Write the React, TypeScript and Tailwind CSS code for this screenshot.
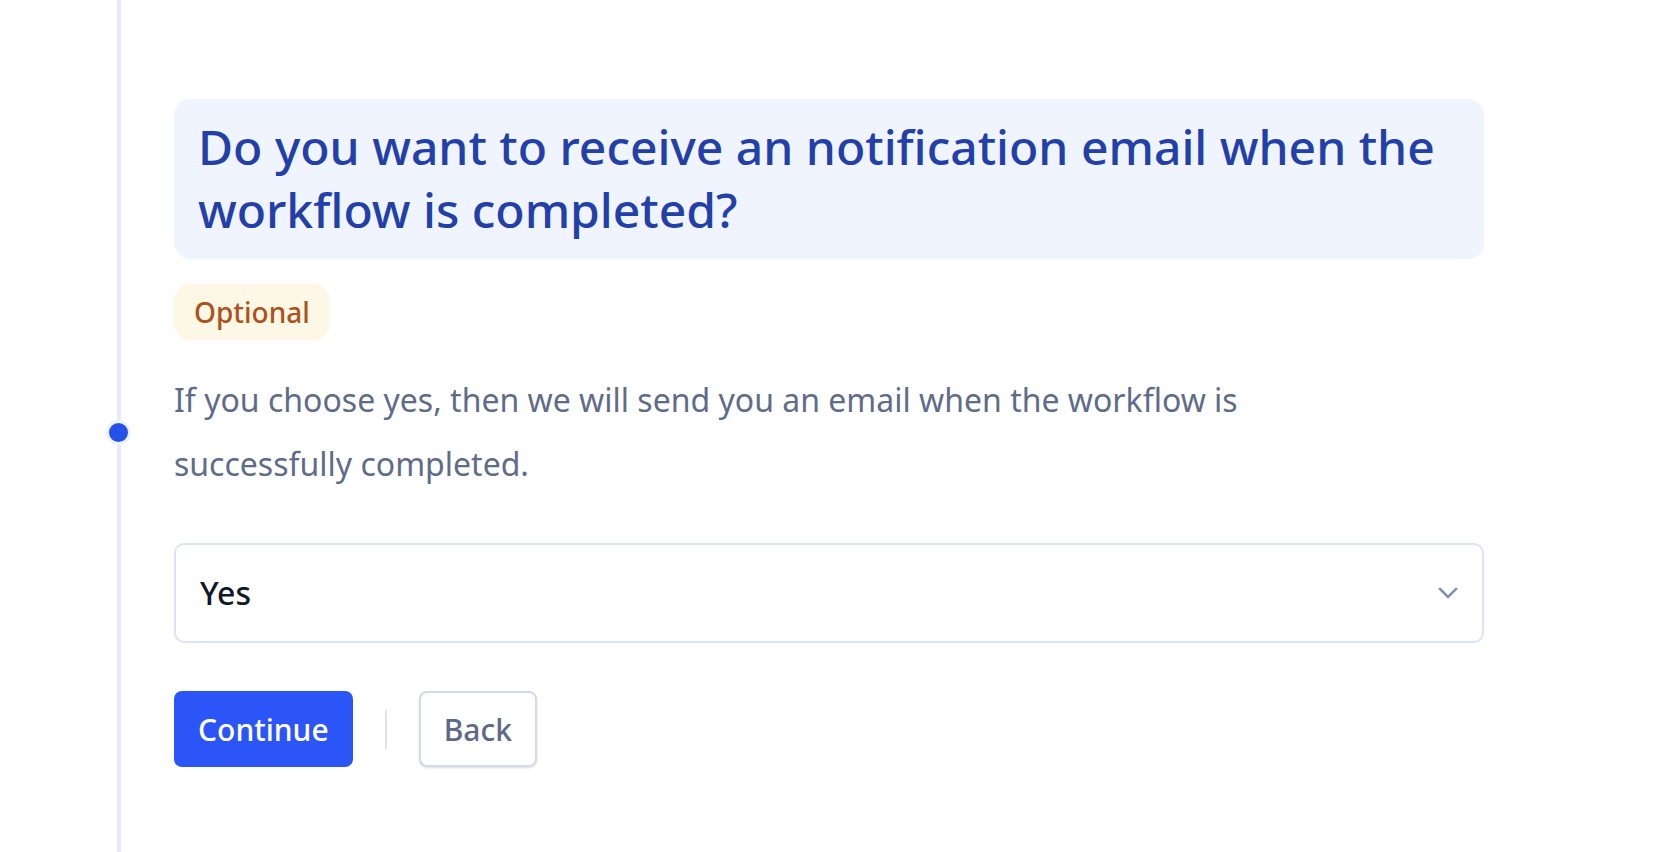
/** NotificationStep — single workflow question step with timeline rail */

import React from 'react';

const font = { fontFamily: '"Noto Sans", "Open Sans", sans-serif' };

const ChevronDown: React.FC = () => (
    <svg width="20" height="12" viewBox="0 0 20 12" fill="none" className="text-[#8592aa]">
        <path d="M2 2l8 8 8-8" stroke="currentColor" strokeWidth="2.6" strokeLinecap="square" />
    </svg>
);

const TimelineRail: React.FC = () => (
    <div className="flex w-[25px] flex-col items-center">
        <div className="h-[420px] w-1 bg-[#e6eafc]" />
        <div className="h-[25px] w-[25px] shrink-0 rounded-full border-[3px] border-[#eef1fe] bg-[#2452e8]" />
        <div className="w-1 flex-1 bg-[#e6eafc]" />
    </div>
);

export default function App() {
    const [answer, setAnswer] = React.useState('Yes');

    return (
        <div className="flex h-[852px] w-full bg-white pl-[106px]" style={font}>
            <TimelineRail />

            <div className="ml-[43px] w-[1310px] pt-[99px]">
                <div className="rounded-2xl bg-[#eff4fe] px-6 pb-[18px] pt-4">
                    <h2 className="text-[48px] font-medium leading-[63px] text-[#2340a8]">
                        Do you want to receive an notification email when the workflow is completed?
                    </h2>
                </div>

                <div className="mt-[25px] inline-flex h-14 items-center rounded-2xl bg-[#fdf7e5] px-5">
                    <span className="text-[28px] font-medium text-[#ac531d]">Optional</span>
                </div>

                <p className="mt-7 max-w-[1120px] text-[32px] leading-[64px] text-[#5f6c88]">
                    If you choose yes, then we will send you an email when the workflow is successfully completed.
                </p>

                <button
                    type="button"
                    onClick={() => setAnswer(answer === 'Yes' ? 'No' : 'Yes')}
                    className="mt-[47px] flex h-[100px] w-full items-center justify-between rounded-[10px] border-2 border-[#dde3f9] bg-white pl-6 pr-[24px]"
                >
                    <span className="text-[32px] font-medium text-[#111827]">{answer}</span>
                    <ChevronDown />
                </button>

                <div className="mt-[48px] flex items-center">
                    <button
                        type="button"
                        className="h-[76px] rounded-lg bg-[#2b55f6] px-[24px] text-[30px] font-medium text-white"
                    >
                        Continue
                    </button>
                    <div className="mx-8 h-[39px] w-[2px] bg-[#dfe3f3]" />
                    <button
                        type="button"
                        className="h-[76px] rounded-lg border-2 border-[#d5dae3] bg-white px-[23px] text-[30px] font-medium text-[#5d6985] shadow-sm"
                    >
                        Back
                    </button>
                </div>
            </div>
        </div>
    );
}
